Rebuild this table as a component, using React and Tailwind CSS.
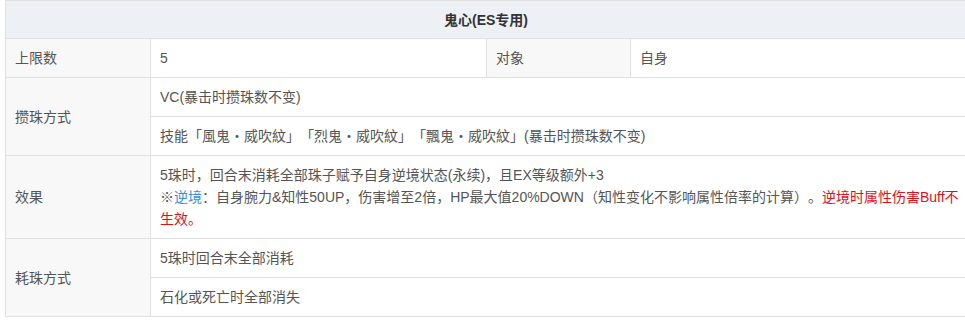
export default function App() {
  const label = "bg-[#f8f8f8] border border-[#e0e0e0] px-[9px] py-2 align-middle text-left font-normal";
  const cell = "border border-[#e0e0e0] px-[9px] py-2 align-middle";

  return (
    <div className="w-[965px] h-[320px] overflow-hidden bg-white pl-[5px]">
      <table
        className="w-[962px] table-fixed border-collapse text-[14px] leading-[22px] text-[#555] [text-spacing-trim:space-all]"
        style={{ fontFamily: '"Liberation Sans", "Noto Sans CJK SC", sans-serif' }}
      >
        <colgroup>
          <col className="w-[145px]" />
          <col className="w-[336px]" />
          <col className="w-[144px]" />
          <col />
        </colgroup>
        <thead>
          <tr>
            <th
              colSpan={4}
              className="h-[38px] py-0 bg-[#edf1f5] border border-[#e0e0e0] text-center font-bold text-[#333]"
            >
              鬼心(ES专用)
            </th>
          </tr>
        </thead>
        <tbody>
          <tr>
            <th className={label}>上限数</th>
            <td className={cell}>5</td>
            <th className={label}>对象</th>
            <td className={cell}>自身</td>
          </tr>

          {/* 攒珠方式 */}
          <tr>
            <th rowSpan={2} className={label}>攒珠方式</th>
            <td colSpan={3} className={cell}>VC(暴击时攒珠数不变)</td>
          </tr>
          <tr>
            <td colSpan={3} className={cell}>
              技能「風鬼・威吹紋」「烈鬼・威吹紋」「飄鬼・威吹紋」(暴击时攒珠数不变)
            </td>
          </tr>

          {/* 效果 */}
          <tr>
            <th className={label}>效果</th>
            <td colSpan={3} className="border border-[#e0e0e0] pl-[9px] pr-[2px] py-2 align-middle">
              5珠时，回合末消耗全部珠子赋予自身逆境状态(永续)，且EX等级额外+3
              <br />
              ※<span className="text-[#3a8ed8]">逆境</span>
              ：自身腕力&amp;知性50UP，伤害增至2倍，HP最大值20%DOWN（知性变化不影响属性倍率的计算）。
              <span className="text-[#e0101a]">逆境时属性伤害Buff不生效。</span>
            </td>
          </tr>

          {/* 耗珠方式 */}
          <tr>
            <th rowSpan={2} className={label}>耗珠方式</th>
            <td colSpan={3} className={cell}>5珠时回合末全部消耗</td>
          </tr>
          <tr>
            <td colSpan={3} className={cell}>石化或死亡时全部消失</td>
          </tr>
        </tbody>
      </table>
    </div>
  );
}
